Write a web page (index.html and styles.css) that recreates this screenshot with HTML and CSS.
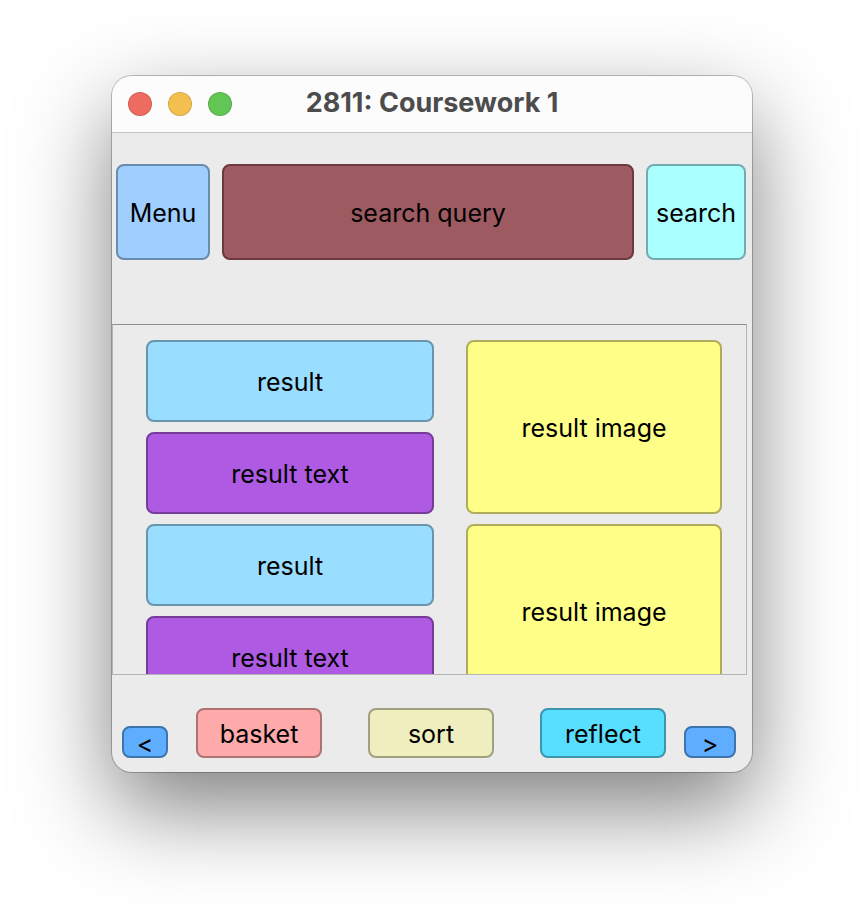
FILE: index.html
```html
<!DOCTYPE html>
<html lang="en">
<head>
<meta charset="utf-8">
<title>2811: Coursework 1</title>
<link rel="stylesheet" href="styles.css">
</head>
<body>
<main class="window">
  <header class="titlebar">
    <div class="lights">
      <button class="light close" aria-label="Close"></button>
      <button class="light minimise" aria-label="Minimise"></button>
      <button class="light zoom" aria-label="Zoom"></button>
    </div>
    <h1 class="title">2811: Coursework 1</h1>
  </header>
  <form class="search-row">
    <button type="button" class="box menu">Menu</button>
    <input type="text" class="box query" aria-label="Search query" value="search query">
    <button type="button" class="box search">search</button>
  </form>
  <section class="results" aria-label="Results">
    <article class="item">
      <h2 class="box name">result</h2>
      <p class="box text">result text</p>
      <div class="box image">result image</div>
    </article>
    <article class="item">
      <h2 class="box name">result</h2>
      <p class="box text">result text</p>
      <div class="box image">result image</div>
    </article>
  </section>
  <nav class="toolbar">
    <button class="box step prev">&lt;</button>
    <div class="actions">
      <button class="box action basket">basket</button>
      <button class="box action sort">sort</button>
      <button class="box action reflect">reflect</button>
    </div>
    <button class="box step next">&gt;</button>
  </nav>
</main>
</body>
</html>
```
FILE: styles.css
```css
* {
  box-sizing: border-box;
}

body {
  min-height: 100vh;
  margin: 0;
  padding: 76px 112px 148px;
  background: #fff;
  color: #000;
  font-family: Inter, "Liberation Sans", sans-serif;
  font-size: 25px;
  line-height: 32px;
}

.window {
  overflow: hidden;
  border-radius: 20px;
  background: #ebebeb;
  box-shadow: 0 0 0 1px rgba(0, 0, 0, 0.24), 0 36px 90px rgba(0, 0, 0, 0.5);
}

.titlebar {
  display: grid;
  grid-template-columns: 1fr auto 1fr;
  align-items: center;
  height: 57px;
  padding: 0 16px;
  border-bottom: 1px solid #c4c4c4;
  background: #fcfcfc;
}

.lights {
  display: flex;
  gap: 16px;
}

.light {
  width: 24px;
  height: 24px;
  padding: 0;
  border: 1px solid rgba(0, 0, 0, 0.12);
  border-radius: 50%;
}

.close { background: #ed6b60; }
.minimise { background: #f5bf4f; }
.zoom { background: #62c655; }

.title {
  margin: 0;
  padding-bottom: 2px;
  color: #4c4c4c;
  font-size: 27px;
  font-weight: 700;
}

.box {
  display: flex;
  align-items: center;
  justify-content: center;
  min-width: 0;
  margin: 0;
  padding: 2px 0 0;
  border: 2px solid;
  border-radius: 8px;
  color: #000;
  font: inherit;
  text-align: center;
}

.search-row {
  display: grid;
  grid-template-columns: 94px 1fr 100px;
  gap: 12px;
  padding: 31px 6px 64px 4px;
}

.search-row .box { height: 96px; }

.menu { background: #9fceff; border-color: #698bae; }
.query { background: #9d5a60; border-color: #6a3a3f; }
.search { background: #aaffff; border-color: #73acad; }

.results {
  display: flex;
  flex-direction: column;
  gap: 10px;
  height: 351px;
  margin-right: 5px;
  padding: 15px 24px 0 33px;
  overflow: hidden;
  border: 1px solid #b4b4b4;
  border-top-color: #8e8e8e;
}

.item {
  display: grid;
  flex: none;
  grid-template-columns: 288fr 256fr;
  grid-template-rows: 82px 82px;
  gap: 10px 32px;
}

.name { background: #9adeff; border-color: #6795ad; }
.text { background: #af5ae3; border-color: #763c9a; }

.image {
  grid-area: 1 / 2 / 3 / 3;
  background: #ffff87;
  border-color: #aeae5a;
}

.toolbar {
  display: flex;
  align-items: flex-end;
  padding: 33px 16px 14px 10px;
}

.actions {
  display: flex;
  flex: 1;
  justify-content: space-between;
  margin: 0 18px 0 28px;
}

.action {
  width: 126px;
  height: 50px;
}

.step {
  height: 32px;
  padding-top: 4px;
  background: #5eadff;
  border-color: #3c74ae;
}

.prev { width: 46px; }
.next { width: 52px; }

.basket { background: #ffaaaa; border-color: #ae7273; }
.sort { background: #eeeebe; border-color: #a0a07f; }
.reflect { background: #58deff; border-color: #3a95ad; }
```
